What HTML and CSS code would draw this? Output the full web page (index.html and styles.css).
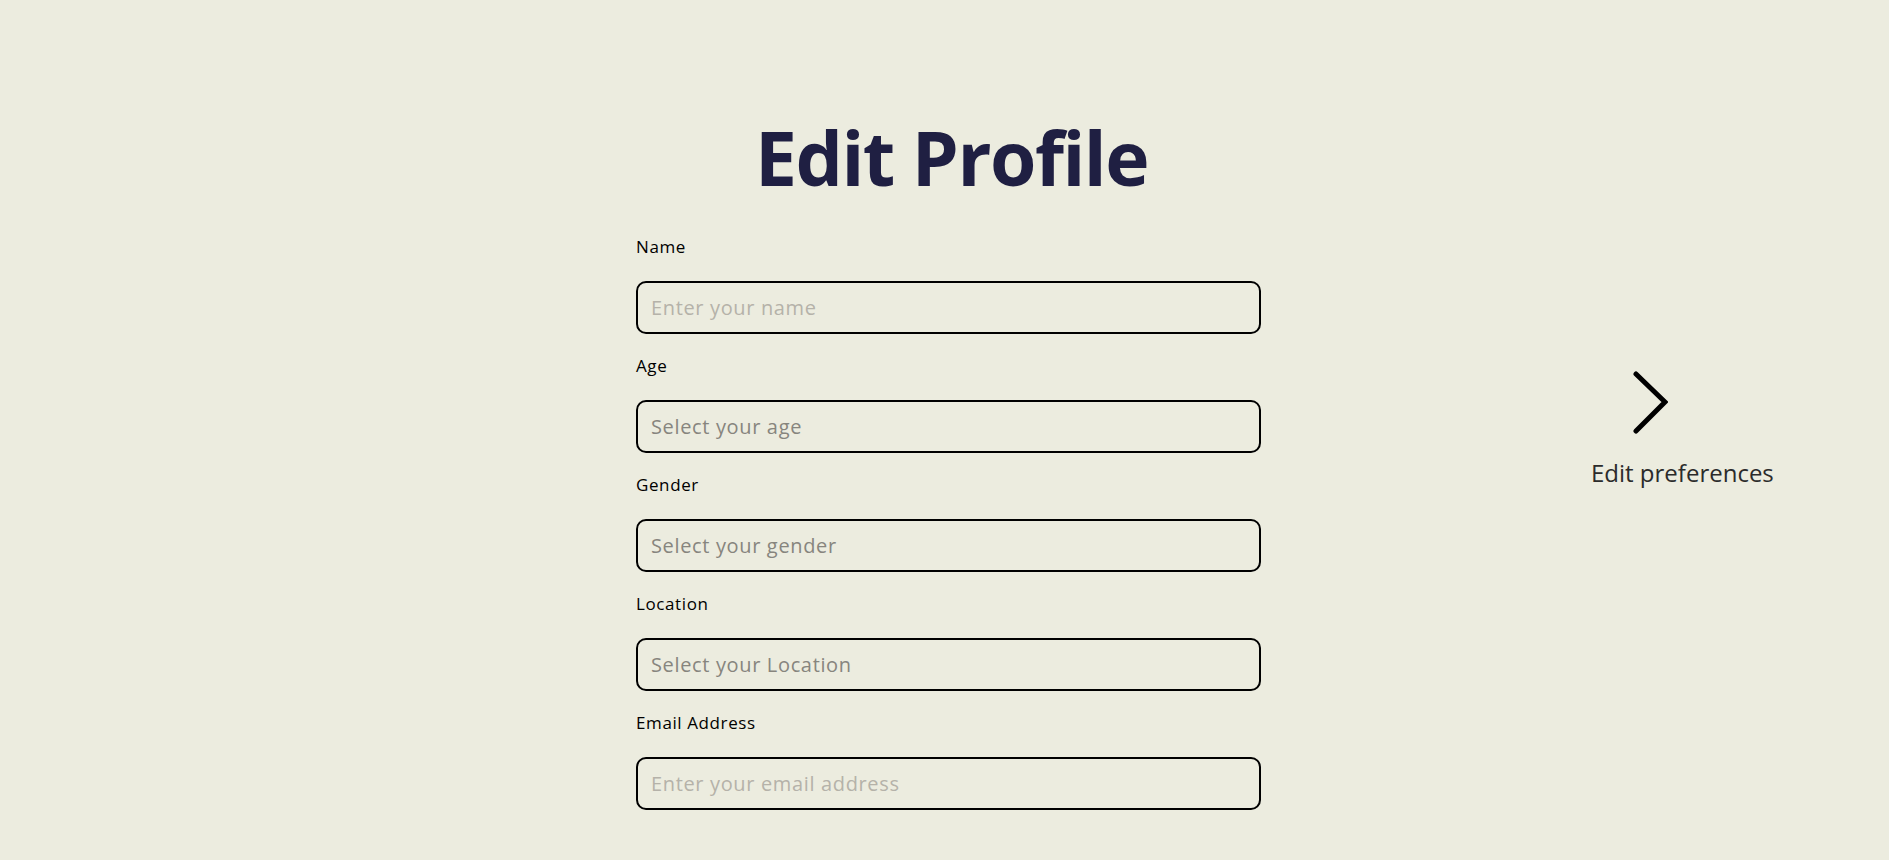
FILE: index.html
```html
<!DOCTYPE html>
<html lang="en">
<head>
<meta charset="utf-8">
<title>Edit Profile</title>
<link rel="stylesheet" href="styles.css">
</head>
<body>
<div class="page">
  <div class="spacer"></div>
  <main class="profile">
    <h1 class="title">Edit Profile</h1>
    <form class="form">
      <div class="field">
        <label class="label" for="name">Name</label>
        <input class="input" id="name" type="text" placeholder="Enter your name">
      </div>
      <div class="field">
        <label class="label" for="age">Age</label>
        <input class="input input-select" id="age" type="text" placeholder="Select your age">
      </div>
      <div class="field">
        <label class="label" for="gender">Gender</label>
        <input class="input input-select" id="gender" type="text" placeholder="Select your gender">
      </div>
      <div class="field">
        <label class="label" for="location">Location</label>
        <input class="input input-select" id="location" type="text" placeholder="Select your Location">
      </div>
      <div class="field">
        <label class="label" for="email">Email Address</label>
        <input class="input" id="email" type="email" placeholder="Enter your email address">
      </div>
    </form>
  </main>
  <aside class="prefs">
    <svg class="chevron" width="40" height="74" viewBox="0 0 40 74" aria-hidden="true">
      <polyline points="8,8 37,36 8,65" fill="none" stroke="#000" stroke-width="5" stroke-linecap="round" stroke-linejoin="miter"/>
    </svg>
    <span class="prefs-text">Edit preferences</span>
  </aside>
</div>
</body>
</html>
```

FILE: styles.css
```css
html, body {
  margin: 0;
  padding: 0;
}

body {
  background: #ececdf;
  font-family: "Open Sans", "Noto Sans", sans-serif;
  color: #000;
  min-height: 100vh;
  overflow: hidden;
}

.page {
  display: grid;
  grid-template-columns: 1fr 625px 1fr;
  align-items: start;
  padding-left: 8px;
}

.profile {
  padding-top: 112px;
  display: flex;
  flex-direction: column;
}

.title {
  margin: 0 0 33px;
  padding-left: 6px;
  text-align: center;
  font-size: 75px;
  line-height: 90px;
  font-weight: 700;
  letter-spacing: -1.5px;
  color: #1f1f42;
}

.form {
  display: flex;
  flex-direction: column;
  gap: 20px;
}

.field {
  display: flex;
  flex-direction: column;
  gap: 22px;
}

.label {
  font-size: 17px;
  line-height: 24px;
  letter-spacing: 0.6px;
  color: #000;
}

.input {
  box-sizing: border-box;
  height: 53px;
  width: 100%;
  margin: 0;
  padding: 0 13px;
  border: 2px solid #000;
  border-radius: 10px;
  background: transparent;
  font-family: inherit;
  font-size: 20px;
  letter-spacing: 0.65px;
  color: #000;
  outline: none;
}

.input::placeholder {
  color: #b5b2a9;
  opacity: 1;
}

.input-select::placeholder {
  color: #87857e;
}

.prefs {
  display: flex;
  flex-direction: column;
  align-items: flex-start;
  margin-left: 330px;
  margin-top: 366px;
}

.chevron {
  display: block;
  margin-left: 37px;
}

.prefs-text {
  margin-top: 18px;
  font-size: 24px;
  line-height: 30px;
  font-weight: 500;
  color: #2b2b2b;
}
```
